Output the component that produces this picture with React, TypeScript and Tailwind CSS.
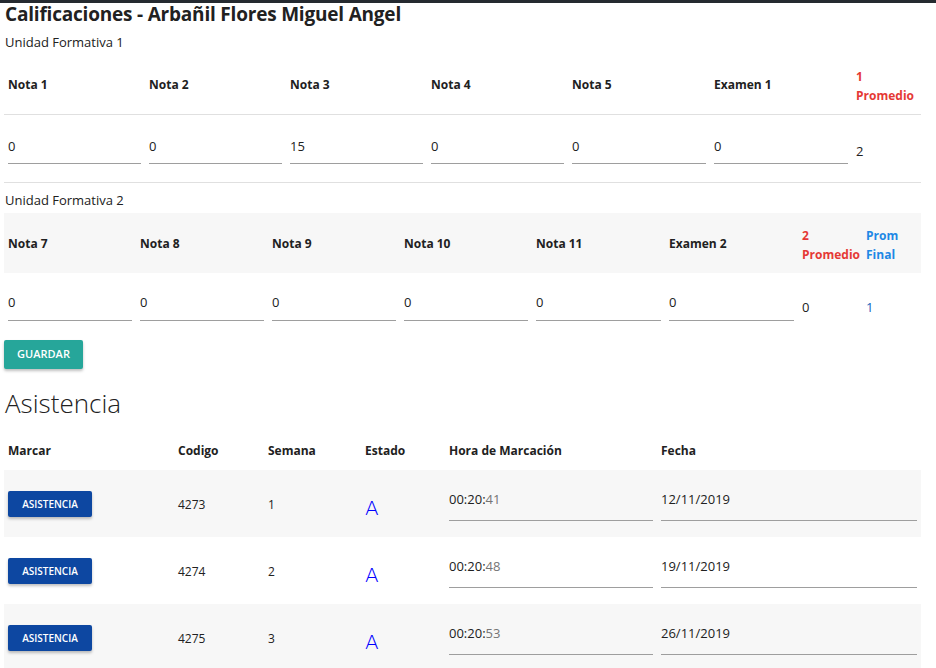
import React from "react";

const notas1 = ["Nota 1", "Nota 2", "Nota 3", "Nota 4", "Nota 5", "Examen 1"];
const valores1 = ["0", "0", "15", "0", "0", "0"];
const notas2 = ["Nota 7", "Nota 8", "Nota 9", "Nota 10", "Nota 11", "Examen 2"];
const valores2 = ["0", "0", "0", "0", "0", "0"];

const asistencias = [
  { codigo: "4273", semana: "1", hora: "00:20:", seg: "41", fecha: "12/11/2019" },
  { codigo: "4274", semana: "2", hora: "00:20:", seg: "48", fecha: "19/11/2019" },
  { codigo: "4275", semana: "3", hora: "00:20:", seg: "53", fecha: "26/11/2019" },
];

const Campo = ({ value, pad = "pt-[8px]" }: { value: React.ReactNode; pad?: string }) => (
  <div className={`h-[34px] border-b border-[#9e9e9e] text-[13px] text-[#212121] leading-[18px] ${pad}`}>
    {value}
  </div>
);

const App = () => {
  return (
    <div
      className="min-h-[668px] bg-white border-t-[3px] border-t-[#252a30] px-1 text-[#212121]"
      style={{ fontFamily: '"Open Sans", "Noto Sans", sans-serif' }}
    >
      <h1 className="text-[19px] font-bold leading-[22px] pl-px tracking-[-0.2px]">
        Calificaciones - Arbañil Flores Miguel Angel
      </h1>
      <div className="text-[13px] mt-[9px] leading-[16px] pl-px">Unidad Formativa 1</div>

      {/* unidad 1 */}
      <div className="mt-[5px] w-[917px]">
        <div className="grid grid-cols-[141px_141px_141px_141px_142px_142px_1fr] h-[60px] items-center border-b border-[#e0e0e0] text-[12px] font-bold">
          {notas1.map((n) => (
            <div key={n} className="px-1 pt-[1px]">{n}</div>
          ))}
          <div className="px-1 text-[#e53935] leading-[19px] pt-[3px]">
            1<br />Promedio
          </div>
        </div>
        <div className="grid grid-cols-[141px_141px_141px_141px_142px_142px_1fr] h-[68px] items-start border-b border-[#e0e0e0]">
          {valores1.map((v, i) => (
            <div key={i} className="px-1 pt-[15px]">
              <Campo value={v} pad="pt-[7px]" />
            </div>
          ))}
          <div className="px-1 text-[13px] pt-[27px]">2</div>
        </div>
      </div>

      <div className="text-[13px] mt-[9px] leading-[16px] pl-px">Unidad Formativa 2</div>

      {/* unidad 2 */}
      <div className="mt-[5px] w-[917px]">
        <div className="grid grid-cols-[132px_132px_132px_132px_133px_133px_64px_1fr] h-[60px] items-center bg-[#f7f7f7] text-[12px] font-bold">
          {notas2.map((n) => (
            <div key={n} className="px-1 pt-[1px]">{n}</div>
          ))}
          <div className="pl-[4px] text-[#e53935] leading-[19px] pt-[3px]">
            2<br />Promedio
          </div>
          <div className="pl-[4px] text-[#1e88e5] leading-[19px] pt-[3px]">
            Prom<br />Final
          </div>
        </div>
        <div className="grid grid-cols-[132px_132px_132px_132px_133px_133px_64px_1fr] h-[60px] items-start">
          {valores2.map((v, i) => (
            <div key={i} className="px-1 pt-[14px]">
              <Campo value={v} pad="pt-[6px]" />
            </div>
          ))}
          <div className="pl-[4px] text-[13px] pt-[25px]">0</div>
          <div className="pl-[4px] text-[13px] pt-[25px] text-[#1565c0]">1</div>
        </div>
      </div>

      <button className="mt-[7px] h-[29px] w-[79px] rounded-[2px] bg-[#26a69a] text-white text-[11px] font-semibold uppercase shadow-[0_2px_3px_rgba(0,0,0,0.25)]">
        Guardar
      </button>

      <h2 className="text-[26px] font-light leading-[32px] mt-[18px] pl-px">Asistencia</h2>

      {/* asistencia */}
      <div className="mt-[11px] w-[917px]">
        <div className="grid grid-cols-[170px_90px_97px_84px_212px_1fr] h-[40px] items-center text-[12px] font-bold">
          <div className="px-1 pt-[2px]">Marcar</div>
          <div className="px-1 pt-[2px]">Codigo</div>
          <div className="px-1 pt-[2px]">Semana</div>
          <div className="px-1 pt-[2px]">Estado</div>
          <div className="px-1 pt-[2px]">Hora de Marcación</div>
          <div className="px-1 pt-[2px]">Fecha</div>
        </div>
        {asistencias.map((a, i) => (
          <div
            key={a.codigo}
            className={`grid grid-cols-[170px_90px_97px_84px_212px_1fr] h-[67px] items-center ${
              i % 2 === 0 ? "bg-[#f7f7f7]" : "bg-white"
            }`}
          >
            <div className="px-1">
              <button className="h-[26px] w-[84px] rounded-[2px] bg-[#0d47a1] text-white text-[10px] font-semibold uppercase shadow-[0_2px_3px_rgba(0,0,0,0.25)]">
                Asistencia
              </button>
            </div>
            <div className="px-1 text-[12px] pt-[2px]">{a.codigo}</div>
            <div className="px-1 text-[12px] pt-[2px]">{a.semana}</div>
            <div
              className="px-1 text-[20px] text-[#0000ff] pt-[8px]"
              style={{ fontFamily: '"DejaVu Sans", sans-serif', fontWeight: 300 }}
            >
              A
            </div>
            <div className="px-1">
              <Campo
                pad="pt-[3px]"
                value={
                  <>
                    {a.hora}
                    <span className="text-[#757575]">{a.seg}</span>
                  </>
                }
              />
            </div>
            <div className="px-1">
              <Campo value={a.fecha} pad="pt-[3px]" />
            </div>
          </div>
        ))}
      </div>
    </div>
  );
};

export default App;
